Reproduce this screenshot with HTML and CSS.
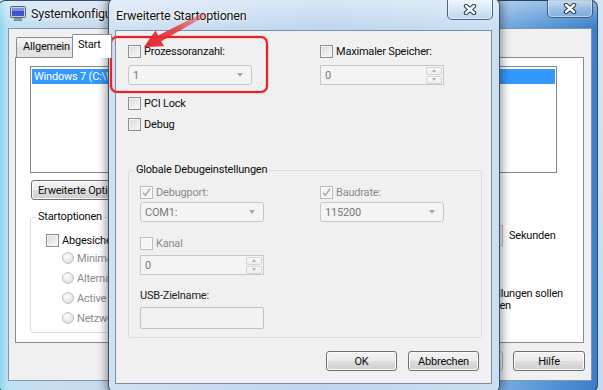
FILE: index.html
```html
<!DOCTYPE html>
<html lang="de">
<head>
<meta charset="utf-8">
<title>Erweiterte Startoptionen</title>
<link rel="stylesheet" href="styles.css">
</head>
<body>
<div class="desktop">

  <div class="window main">
    <div class="titlebar">
      <svg class="appicon" width="16" height="15" viewBox="0 0 16 15">
        <rect x="0.5" y="0.5" width="15" height="11" rx="1" fill="#c9ced6" stroke="#5b6470"/>
        <rect x="2" y="2" width="12" height="8" fill="#3f55c9"/>
        <rect x="2" y="2" width="12" height="3" fill="#7d8fe6"/>
        <path d="M5 12 L11 12 L12 14.5 L4 14.5 Z" fill="#9aa1ab" stroke="#5b6470" stroke-width="0.6"/>
      </svg>
      <span class="title main-title">Systemkonfiguration</span>
      <span class="closebtn main-close">
        <svg width="14" height="11" viewBox="0 0 14 11"><path d="M3 2 L11 9 M11 2 L3 9" stroke="#26374d" stroke-width="4.4" stroke-linecap="round"/><path d="M3 2 L11 9 M11 2 L3 9" stroke="#fff" stroke-width="2.4" stroke-linecap="round"/></svg>
      </span>
    </div>
    <div class="client main-client">
      <div class="tabs">
        <span class="tab first">Allgemein</span>
        <span class="tab active">Start</span>
      </div>
      <div class="tabpanel">
        <div class="listbox">
          <div class="item sel"><span class="item-text">Windows 7 (C:\Windows)</span></div>
        </div>
        <div class="btnrow">
          <button class="btn wide"><span class="btn-clip">Erweiterte Optionen...</span></button>
        </div>
        <div class="lower">
          <fieldset class="group startopts">
            <legend>Startoptionen</legend>
            <div class="group-body startopts-body">
              <label class="check"><span class="cb"></span>Abgesicherter Start</label>
              <div class="radios">
                <label class="radio-row dis"><span class="radio"></span>Minimal</label>
                <label class="radio-row dis"><span class="radio"></span>Alternative Shell</label>
                <label class="radio-row dis"><span class="radio"></span>Active Directory</label>
                <label class="radio-row dis"><span class="radio"></span>Netzwerk</label>
              </div>
            </div>
          </fieldset>
          <div class="timeout">
            <div class="timeout-row">
              <div class="spin tspin"><span class="spin-val"></span></div>
              <span class="unit">Sekunden</span>
            </div>
            <label class="check permanent"><span class="cb"></span><span class="perm-text"><span class="perm-line">Alle Starteinstellungen sollen</span><span class="perm-line second">dauerhaft gelten</span></span></label>
          </div>
        </div>
      </div>
      <div class="footer">
        <button class="btn fbtn dis"></button>
        <button class="btn fbtn">Hilfe</button>
      </div>
    </div>
  </div>

  <div class="window dialog">
    <div class="titlebar dlg-titlebar">
      <span class="title dlg-title">Erweiterte Startoptionen</span>
      <span class="closebtn dlg-close">
        <svg width="14" height="11" viewBox="0 0 14 11"><path d="M3 2 L11 9 M11 2 L3 9" stroke="#26374d" stroke-width="4.4" stroke-linecap="round"/><path d="M3 2 L11 9 M11 2 L3 9" stroke="#fff" stroke-width="2.4" stroke-linecap="round"/></svg>
      </span>
    </div>
    <div class="client dlg-client">
      <div class="optgrid">
        <label class="check"><span class="cb"></span>Prozessoranzahl:</label>
        <label class="check"><span class="cb"></span>Maximaler Speicher:</label>
        <div class="combo"><span>1</span><i class="arrow"></i></div>
        <div class="spin"><span class="spin-val">0</span><span class="spin-btns"><i class="sb up"><b></b></i><i class="sb down"><b></b></i></span></div>
      </div>
      <label class="check pci"><span class="cb"></span>PCI Lock</label>
      <label class="check dbg"><span class="cb"></span>Debug</label>
      <fieldset class="group debug">
        <legend>Globale Debugeinstellungen</legend>
        <div class="group-body debug-body">
          <div class="dbggrid">
            <label class="check dis"><span class="cb on"><svg width="11" height="11" viewBox="0 0 11 11"><path d="M2 5.8 L4.4 8.4 L9 1.8" fill="none" stroke="#a9a9a9" stroke-width="1.5"/></svg></span>Debugport:</label>
            <label class="check dis"><span class="cb on"><svg width="11" height="11" viewBox="0 0 11 11"><path d="M2 5.8 L4.4 8.4 L9 1.8" fill="none" stroke="#a9a9a9" stroke-width="1.5"/></svg></span>Baudrate:</label>
            <div class="combo"><span>COM1:</span><i class="arrow"></i></div>
            <div class="combo"><span>115200</span><i class="arrow"></i></div>
          </div>
          <label class="check dis kanal"><span class="cb"></span>Kanal</label>
          <div class="spin kspin"><span class="spin-val">0</span><span class="spin-btns"><i class="sb up"><b></b></i><i class="sb down"><b></b></i></span></div>
          <div class="lbl usb">USB-Zielname:</div>
          <div class="textbox"></div>
        </div>
      </fieldset>
      <div class="dlg-buttons">
        <button class="btn dbtn">OK</button>
        <button class="btn dbtn">Abbrechen</button>
      </div>
    </div>
  </div>

  <svg class="annotation" width="603" height="390" viewBox="0 0 603 390">
    <defs>
      <linearGradient id="arrowgrad" x1="205" y1="14" x2="144" y2="47" gradientUnits="userSpaceOnUse">
        <stop offset="0" stop-color="#ee4a50" stop-opacity="0.4"/>
        <stop offset="0.5" stop-color="#e8323a" stop-opacity="0.88"/>
        <stop offset="1" stop-color="#e2242b"/>
      </linearGradient>
    </defs>
    <rect x="111" y="37" width="156" height="55" rx="6" fill="none" stroke="#f29a9c" stroke-width="3.5" opacity="0.5"/>
    <rect x="111" y="37" width="156" height="55" rx="6" fill="none" stroke="#e1252b" stroke-width="2"/>
    <polygon points="204.05,12.24 158.3,35.6 155.5,30.5 144,47 164.1,46.3 161.3,41.2 205.95,15.76" fill="url(#arrowgrad)"/>
  </svg>
</div>
</body>
</html>
```

FILE: styles.css
```css
* { box-sizing: border-box; }
html, body { margin: 0; padding: 0; }
body {
  width: 603px;
  height: 390px;
  overflow: hidden;
  font-family: Roboto, "Liberation Sans", sans-serif;
  font-size: 11px;
  letter-spacing: -0.2px;
  color: #0e0e0e;
}
button { font-family: inherit; font-size: 11px; letter-spacing: -0.2px; color: #0e0e0e; }

.desktop {
  position: relative;
  width: 603px;
  height: 390px;
  overflow: hidden;
  background: linear-gradient(#d3e6f6, #c0dbf1);
}

/* ---------- windows ---------- */
.window {
  position: absolute;
  display: flex;
  flex-direction: column;
  border: 1px solid rgba(22, 40, 66, 0.78);
  border-radius: 7px;
}
.main {
  left: -2px;
  top: 0;
  width: 600px;
  height: 392px;
  background:
    linear-gradient(180deg, rgba(255,255,255,0.4), rgba(255,255,255,0) 26px),
    linear-gradient(90deg, #84d3ef 0px, #bce2f4 9px, #cadcee 60px, #b6d0eb 300px, #90bae4 470px, #5193d6 555px, #3b7dc9 600px);
}
.dialog {
  left: 108px;
  top: -2px;
  width: 392px;
  height: 395px;
  background:
    linear-gradient(180deg, rgba(255,255,255,0.45), rgba(255,255,255,0) 30px),
    linear-gradient(90deg, #cfe1f3, #bdd5ee 55%, #cadff2);
  box-shadow: 0 0 10px 2px rgba(0, 0, 0, 0.42);
}

.titlebar {
  display: flex;
  align-items: flex-start;
  flex: none;
}
.main .titlebar { height: 27px; padding-left: 11px; }
.dlg-titlebar { height: 31px; padding-left: 7px; }

.appicon { margin-top: 5px; flex: none; }
.title {
  font-size: 12.5px;
  line-height: 16px;
  color: #111;
  text-shadow: 0 0 6px rgba(255,255,255,0.95), 0 0 3px rgba(255,255,255,0.9);
  white-space: nowrap;
}
.main-title {
  margin-left: 5px;
  margin-top: 5px;
  width: 77px;
  overflow: hidden;
}
.dlg-title { margin-top: 9px; }

.closebtn {
  margin-left: auto;
  width: 46px;
  display: flex;
  align-items: center;
  justify-content: center;
  border: 1px solid rgba(28, 52, 86, 0.72);
  border-top: none;
  border-radius: 0 0 5px 5px;
  background: linear-gradient(180deg, rgba(255,255,255,0.5), rgba(220,236,250,0.3) 50%, rgba(160,196,232,0.45));
  box-shadow: inset 0 0 0 1px rgba(255,255,255,0.45);
}
.main-close { height: 18px; margin-top: -1px; margin-right: 4px; }
.dlg-close { height: 21px; margin-top: 0; margin-right: 6px; }

.client {
  background: #f0f0f0;
  border: 1px solid #7d8fa6;
  flex: none;
  display: flex;
  flex-direction: column;
}
.main-client { height: 353px; margin: 0 5px 0 9px; border-color: #8296ad; }
.dlg-client { height: 354px; margin: 0 7px 0 6px; padding: 12px; }

/* ---------- main window content ---------- */
.tabs {
  display: flex;
  align-items: flex-end;
  height: 28px;
  padding-top: 5px;
  margin-left: 7px;
  flex: none;
}
.tab {
  height: 20px;
  padding: 0 6px;
  line-height: 18px;
  border: 1px solid #898c95;
  border-bottom: none;
  border-radius: 2px 2px 0 0;
  background: linear-gradient(#f4f4f4, #ececec 50%, #dfdfdf 50%, #e6e6e6);
  margin-right: -1px;
  white-space: nowrap;
}
.tab.first { width: 57px; }
.tab.active {
  width: 40px;
  height: 24px;
  line-height: 20px;
  padding: 0 6px 0 5px;
  background: #fff;
  margin-bottom: -1px;
  position: relative;
  z-index: 1;
}
.tabpanel {
  height: 286px;
  margin: 0 7px 0 6px;
  border: 1px solid #898c95;
  background: #fff;
  padding: 8px 0 0 14px;
  flex: none;
}
.listbox {
  width: 527px;
  height: 107px;
  border: 1px solid #828790;
  background: #fff;
  padding: 2px 1px;
}
.item {
  height: 15px;
  line-height: 15px;
  padding-left: 2px;
  white-space: nowrap;
  overflow: hidden;
}
.item.sel { background: #3399ff; color: #fff; }
.item-text { display: block; width: 76px; overflow: hidden; }

.btnrow {
  display: flex;
  gap: 8px;
  margin-top: 7px;
  padding-left: 1px;
}
.btnrow .btn.wide { width: 122px; text-align: left; padding-left: 6px; }
.btn-clip { display: block; width: 70px; overflow: hidden; white-space: nowrap; }

.lower {
  display: flex;
  margin-top: 10px;
}

/* ---------- controls ---------- */
.btn {
  height: 20px;
  border: 1px solid #707070;
  border-radius: 3px;
  background: linear-gradient(#f2f2f2 0%, #ebebeb 48%, #dddddd 52%, #cfcfcf 100%);
  box-shadow: inset 0 0 0 1px #fbfbfb;
  padding: 0;
  line-height: 17px;
  text-align: center;
}
.btn.dis { color: #8a8a8a; border-color: #adb2b5; }

.check {
  display: flex;
  align-items: center;
  gap: 3px;
  height: 16px;
  white-space: nowrap;
}
.cb {
  width: 13px;
  height: 13px;
  flex: none;
  border: 1px solid #8e8f8f;
  background: linear-gradient(135deg, #d9d9d9, #f8f8f8);
  box-shadow: inset 0 0 0 1px #f4f4f4;
  display: flex;
  align-items: center;
  justify-content: center;
}
.check.dis { color: #8b8b8b; }
.check.dis .cb {
  border-color: #bcbcbc;
  background: #f4f4f4;
  box-shadow: inset 0 0 0 1px #fbfbfb;
}

.radio-row {
  display: flex;
  align-items: center;
  gap: 3px;
  height: 20px;
  white-space: nowrap;
}
.radio-row.dis { color: #8b8b8b; }
.radio {
  width: 12px;
  height: 12px;
  flex: none;
  border-radius: 50%;
  border: 1px solid #c1c1c1;
  background: radial-gradient(circle at 40% 35%, #fdfdfd, #e2e2e2 70%, #d8d8d8);
}

.combo {
  width: 124px;
  height: 20px;
  border: 1px solid #c7c7c7;
  border-radius: 3px;
  background: #f4f4f4;
  display: flex;
  align-items: center;
  justify-content: space-between;
  padding: 0 8px 0 4px;
  color: #7a7a7a;
}
.arrow {
  width: 0;
  height: 0;
  border-left: 3.5px solid transparent;
  border-right: 3.5px solid transparent;
  border-top: 4px solid #a9a9a9;
}

.spin {
  width: 124px;
  height: 20px;
  border: 1px solid #c7c7c7;
  background: #f4f4f4;
  display: flex;
  align-items: center;
  padding: 0 1px 0 4px;
  color: #7a7a7a;
}
.spin-val { flex: 1; }
.spin-btns {
  display: flex;
  flex-direction: column;
  gap: 1px;
  width: 16px;
}
.sb {
  height: 8px;
  border: 1px solid #d3d3d3;
  border-radius: 2px;
  background: linear-gradient(#fafafa, #ececec);
  display: flex;
  align-items: center;
  justify-content: center;
}
.sb b {
  width: 0;
  height: 0;
  border-left: 2.5px solid transparent;
  border-right: 2.5px solid transparent;
}
.sb.up b { border-bottom: 3px solid #b0b0b0; }
.sb.down b { border-top: 3px solid #b0b0b0; }

.textbox {
  width: 124px;
  height: 22px;
  border: 1px solid #c3c3c3;
  border-radius: 2px;
  background: #f2f2f2;
}

.lbl { line-height: 14px; white-space: nowrap; }

.group {
  margin: 0;
  padding: 0;
  border: 1px solid #d5dfe5;
  border-radius: 3px;
  min-width: 0;
}
.group legend {
  padding: 0 2px;
  margin-left: 5px;
  line-height: 14px;
}

/* main window lower area */
.startopts { width: 380px; padding-bottom: 4px; }
.startopts-body { padding: 8px 0 0 15px; width: 78px; overflow: hidden; }
.radios { padding-left: 16px; }

.timeout {
  margin-left: 10px;
  display: flex;
  flex-direction: column;
  padding-top: 15px;
}
.timeout-row {
  display: flex;
  align-items: center;
  gap: 6px;
}
.tspin { width: 83px; height: 21px; }
.unit { white-space: nowrap; }
.permanent {
  margin-top: 42px;
  margin-left: -9px;
  height: auto;
  align-items: flex-start;
}
.perm-text { display: flex; flex-direction: column; line-height: 12px; }
.perm-line { white-space: nowrap; }
.perm-line.second { padding-left: 7px; }

.footer {
  display: flex;
  justify-content: flex-end;
  gap: 10px;
  margin-top: 8px;
  padding-right: 6px;
}
.fbtn { width: 72px; }

/* ---------- dialog content ---------- */
.optgrid {
  display: grid;
  grid-template-columns: 192px 124px;
  grid-template-rows: 16px 20px;
  row-gap: 6px;
}
.pci { margin-top: 10px; }
.dbg { margin-top: 5px; }
.debug { width: 354px; margin-top: 31px; padding-bottom: 8px; }
.debug-body { padding: 7px 0 0 11px; }
.dbggrid {
  display: grid;
  grid-template-columns: 180px 124px;
  grid-template-rows: 16px 20px;
  row-gap: 2px;
}
.kanal { margin-top: 13px; }
.kspin { margin-top: 4px; }
.usb { margin-top: 14px; color: #222; }
.debug .textbox { margin-top: 4px; }

.dlg-buttons {
  display: flex;
  justify-content: flex-end;
  gap: 11px;
  margin-top: 13px;
}
.dbtn { width: 71px; }

/* ---------- annotation overlay ---------- */
.annotation {
  position: absolute;
  left: 0;
  top: 0;
  pointer-events: none;
}
```
